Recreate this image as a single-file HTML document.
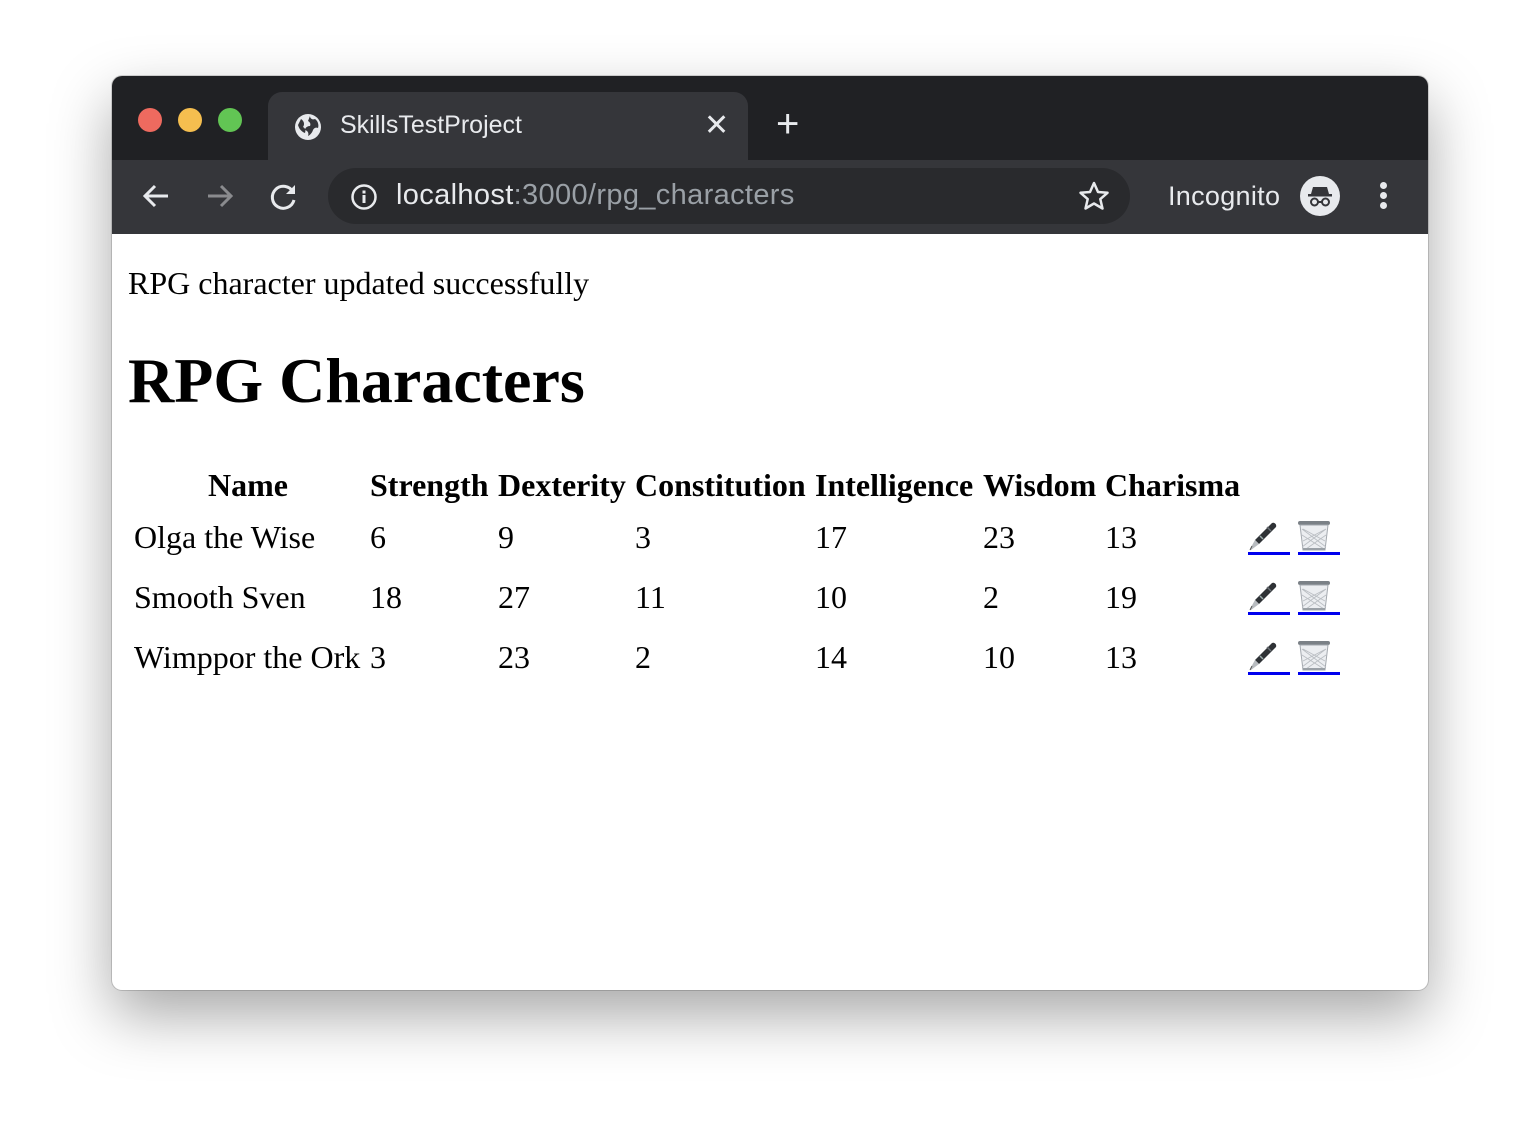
<!DOCTYPE html>
<html><head><style>
body{margin:0;width:1540px;height:1138px;background:#fff;position:relative;overflow:hidden;font-family:"Liberation Serif",serif}
.win{position:absolute;left:112px;top:76px;width:1316px;height:914px;border-radius:10px;overflow:hidden;background:#fff;box-shadow:0 25px 60px rgba(0,0,0,.35),0 0 0 1px rgba(0,0,0,.15)}
.tabbar{position:absolute;left:0;top:0;width:100%;height:84px;background:#202124}
.toolbar{position:absolute;left:0;top:84px;width:100%;height:74px;background:#35363a}
.dot{position:absolute;top:32px;width:24px;height:24px;border-radius:50%}
.tab{position:absolute;left:156px;top:16px;width:480px;height:68px;background:#35363a;border-radius:14px 14px 0 0}
.ui{font-family:"Liberation Sans",sans-serif;color:#e8eaed;position:absolute;white-space:nowrap}
.url{position:absolute;left:216px;top:92px;width:802px;height:56px;border-radius:28px;background:#292a2d}
.t{position:absolute;font-size:32px;white-space:nowrap;line-height:1}
.b{font-weight:bold}
.lnk{position:absolute;height:3px;background:#0000ee}
</style></head><body>
<div class="win">
<div class="tabbar"></div>
<div class="dot" style="left:26px;background:#ee6a5f"></div>
<div class="dot" style="left:66px;background:#f5be4f"></div>
<div class="dot" style="left:106px;background:#62c554"></div>
<div class="tab"></div>
<svg style="position:absolute;left:181px;top:36px" width="30" height="30" viewBox="0 0 30 30"><circle cx="15" cy="15" r="13" fill="#e8eaed"/><path d="M8 7c3 2 4 5 2 8 2 1 3 3 2 6-3-1-6-4-7-8zM17 4c0 3 3 4 5 3 3 2 4 6 3 9-2-1-4 0-5 2-1 3-3 5-5 6 1-3 0-5-3-6 0-2 2-4 5-4 1-2 0-4-2-5z" fill="#35363a"/></svg>
<div class="ui" style="left:228px;top:35px;font-size:25px">SkillsTestProject</div>
<div class="ui" style="left:592px;top:32px;font-size:30px">✕</div>
<div class="ui" style="left:664px;top:26px;font-size:40px;font-weight:300">+</div>
<div class="toolbar"></div>
<svg style="position:absolute;left:28px;top:104px" width="32" height="32" viewBox="0 0 32 32" fill="none" stroke="#e8eaed" stroke-width="3"><path d="M28 16H5M15 6L5 16l10 10"/></svg>
<svg style="position:absolute;left:92px;top:104px" width="32" height="32" viewBox="0 0 32 32" fill="none" stroke="#8a8b8e" stroke-width="3"><path d="M4 16h23M17 6l10 10-10 10"/></svg>
<svg style="position:absolute;left:156px;top:104px" width="32" height="32" viewBox="0 0 32 32" fill="none" stroke="#e8eaed" stroke-width="3"><path d="M25 12A11 11 0 1 0 26 20"/><path d="M27 5v9h-9z" fill="#e8eaed" stroke="none"/></svg>
<div class="url"></div>
<svg style="position:absolute;left:238px;top:107px" width="28" height="28" viewBox="0 0 28 28"><circle cx="14" cy="14" r="11.5" fill="none" stroke="#e8eaed" stroke-width="2.5"/><rect x="12.5" y="12" width="3" height="8" fill="#e8eaed"/><rect x="12.5" y="7.5" width="3" height="3" fill="#e8eaed"/></svg>
<div class="ui" style="left:284px;top:103px;font-size:29px;letter-spacing:0.35px">localhost<span style="color:#9aa0a6">:3000/rpg_characters</span></div>
<svg style="position:absolute;left:966px;top:104px" width="32" height="32" viewBox="0 0 32 32"><path d="M16 3l4 9 9.5.8-7.2 6.3 2.2 9.4L16 23.5 7.5 28.5l2.2-9.4L2.5 12.8 12 12z" fill="none" stroke="#e8eaed" stroke-width="2.5" stroke-linejoin="round"/></svg>
<div class="ui" style="left:1056px;top:105px;font-size:27px;letter-spacing:0.3px">Incognito</div>
<svg style="position:absolute;left:1188px;top:100px" width="40" height="40" viewBox="0 0 40 40"><circle cx="20" cy="20" r="20" fill="#e8eaed"/><path d="M13 11h14l2 7H11z" fill="#35363a"/><rect x="8" y="18" width="24" height="2.5" fill="#35363a"/><circle cx="14.5" cy="26" r="3.5" fill="none" stroke="#35363a" stroke-width="2"/><circle cx="25.5" cy="26" r="3.5" fill="none" stroke="#35363a" stroke-width="2"/><path d="M18 26h4" stroke="#35363a" stroke-width="2"/></svg>
<div style="position:absolute;left:1268px;top:106px;width:7px;height:7px;border-radius:50%;background:#e8eaed;box-shadow:0 10px 0 #e8eaed,0 20px 0 #e8eaed"></div>
</div>

<div class="t" style="left:128px;top:267px">RPG character updated successfully</div>
<div class="t b" style="left:128px;top:349px;font-size:64px">RPG Characters</div>

<div class="t b" style="left:208px;top:469px">Name</div>
<div class="t b" style="left:370px;top:469px">Strength</div>
<div class="t b" style="left:498px;top:469px">Dexterity</div>
<div class="t b" style="left:635px;top:469px">Constitution</div>
<div class="t b" style="left:815px;top:469px">Intelligence</div>
<div class="t b" style="left:983px;top:469px">Wisdom</div>
<div class="t b" style="left:1105px;top:469px">Charisma</div>

<div class="t" style="left:134px;top:521px">Olga the Wise</div>
<div class="t" style="left:370px;top:521px">6</div><div class="t" style="left:498px;top:521px">9</div><div class="t" style="left:635px;top:521px">3</div><div class="t" style="left:815px;top:521px">17</div><div class="t" style="left:983px;top:521px">23</div><div class="t" style="left:1105px;top:521px">13</div>
<div class="t" style="left:134px;top:581px">Smooth Sven</div>
<div class="t" style="left:370px;top:581px">18</div><div class="t" style="left:498px;top:581px">27</div><div class="t" style="left:635px;top:581px">11</div><div class="t" style="left:815px;top:581px">10</div><div class="t" style="left:983px;top:581px">2</div><div class="t" style="left:1105px;top:581px">19</div>
<div class="t" style="left:134px;top:641px">Wimppor the Ork</div>
<div class="t" style="left:370px;top:641px">3</div><div class="t" style="left:498px;top:641px">23</div><div class="t" style="left:635px;top:641px">2</div><div class="t" style="left:815px;top:641px">14</div><div class="t" style="left:983px;top:641px">10</div><div class="t" style="left:1105px;top:641px">13</div>

<svg width="0" height="0" style="position:absolute"><defs>
<g id="pen"><path d="M25 1c2-1 5 1 4 4L12 22 8 18z" fill="#2f3236"/><path d="M20 5l4 4" stroke="#6b7076" stroke-width="1.5"/><path d="M13 14l3 3" stroke="#9aa" stroke-width="1.5"/><path d="M8 18l4 4-8 6 -1-1z" fill="#b8bcc0"/><path d="M3 28l2-4" stroke="#555" stroke-width="1"/></g>
<g id="trash"><rect x="2" y="1" width="32" height="4" rx="2" fill="#7b8187"/><path d="M4 5h28l-3 25H7z" fill="#eceef1" stroke="#a2a7ad" stroke-width="1"/><path d="M6 9l24 18M30 9L6 27M6 15l22 14M30 15L10 29M7 21l23-12M29 21L7 9" stroke="#b9bdc2" stroke-width="0.8"/><rect x="7" y="28" width="22" height="2" fill="#9aa0a6"/></g>
</defs></svg>
<svg style="position:absolute;left:1247px;top:522px" width="32" height="32"><use href="#pen"/></svg>
<svg style="position:absolute;left:1296px;top:520px" width="40" height="34"><use href="#trash"/></svg>
<div class="lnk" style="left:1248px;top:552px;width:42px"></div><div class="lnk" style="left:1298px;top:552px;width:42px"></div>
<svg style="position:absolute;left:1247px;top:582px" width="32" height="32"><use href="#pen"/></svg>
<svg style="position:absolute;left:1296px;top:580px" width="40" height="34"><use href="#trash"/></svg>
<div class="lnk" style="left:1248px;top:612px;width:42px"></div><div class="lnk" style="left:1298px;top:612px;width:42px"></div>
<svg style="position:absolute;left:1247px;top:642px" width="32" height="32"><use href="#pen"/></svg>
<svg style="position:absolute;left:1296px;top:640px" width="40" height="34"><use href="#trash"/></svg>
<div class="lnk" style="left:1248px;top:672px;width:42px"></div><div class="lnk" style="left:1298px;top:672px;width:42px"></div>
</body></html>
